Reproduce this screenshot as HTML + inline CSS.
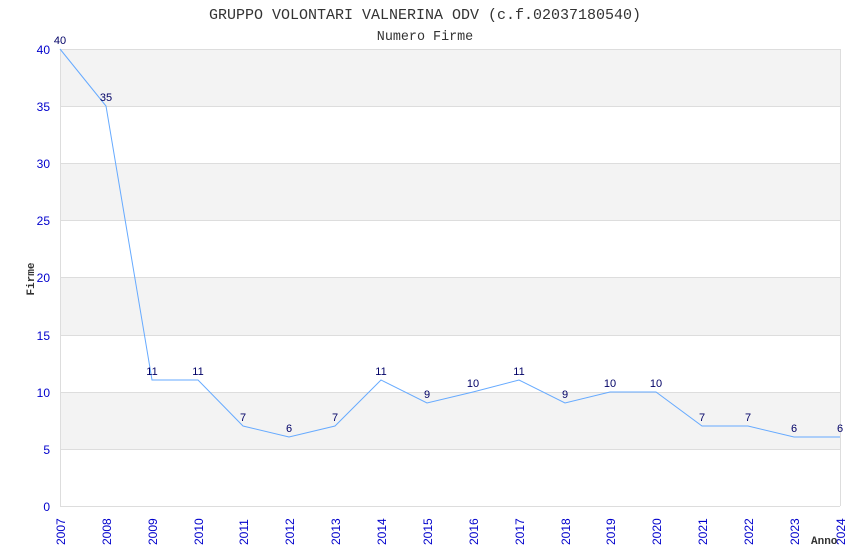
<!DOCTYPE html>
<html><head><style>body{margin:0;background:#fff}svg{display:block}</style></head><body>
<svg width="850" height="550" xmlns="http://www.w3.org/2000/svg" font-family="Liberation Sans, sans-serif">
<text x="425" y="19" text-anchor="middle" font-family="Liberation Mono, monospace" font-size="15" fill="#333">GRUPPO VOLONTARI VALNERINA ODV (c.f.02037180540)</text>
<text x="425" y="40" text-anchor="middle" font-family="Liberation Mono, monospace" font-size="13.4" fill="#333">Numero Firme</text>
<g fill="#f3f3f3">
<rect x="60" y="49" width="780" height="57"/>
<rect x="60" y="163" width="780" height="57"/>
<rect x="60" y="278" width="780" height="57"/>
<rect x="60" y="392" width="780" height="57"/>
</g>
<g stroke="#ddd" stroke-width="1">
<line x1="60" y1="49.5" x2="840" y2="49.5"/><line x1="60" y1="106.5" x2="840" y2="106.5"/>
<line x1="60" y1="163.5" x2="840" y2="163.5"/><line x1="60" y1="220.5" x2="840" y2="220.5"/>
<line x1="60" y1="277.5" x2="840" y2="277.5"/><line x1="60" y1="335.5" x2="840" y2="335.5"/>
<line x1="60" y1="392.5" x2="840" y2="392.5"/><line x1="60" y1="449.5" x2="840" y2="449.5"/>
<line x1="60" y1="506.5" x2="840" y2="506.5"/>
<line x1="60.5" y1="49" x2="60.5" y2="506"/><line x1="840.5" y1="49" x2="840.5" y2="506"/>
</g>
<g fill="#00c" font-size="12" text-anchor="end">
<text x="50" y="54">40</text><text x="50" y="111">35</text><text x="50" y="168">30</text>
<text x="50" y="225">25</text><text x="50" y="282">20</text><text x="50" y="340">15</text>
<text x="50" y="397">10</text><text x="50" y="454">5</text><text x="50" y="511">0</text>
</g>
<text transform="translate(34,279) rotate(-90)" text-anchor="middle" font-family="Liberation Mono, monospace" font-size="11" font-weight="bold" fill="#333">Firme</text>
<polyline fill="none" stroke="#66aaff" stroke-width="1" points="60,49 106,106 152,380 198,380 243,426 289,437 335,426 381,380 427,403 473,392 519,380 565,403 610,392 656,392 702,426 748,426 794,437 840,437"/>
<g fill="#006" font-size="11" text-anchor="middle">
<text x="60" y="44">40</text><text x="106" y="101">35</text><text x="152" y="375">11</text>
<text x="198" y="375">11</text><text x="243" y="421">7</text><text x="289" y="432">6</text>
<text x="335" y="421">7</text><text x="381" y="375">11</text><text x="427" y="398">9</text>
<text x="473" y="387">10</text><text x="519" y="375">11</text><text x="565" y="398">9</text>
<text x="610" y="387">10</text><text x="656" y="387">10</text><text x="702" y="421">7</text>
<text x="748" y="421">7</text><text x="794" y="432">6</text><text x="840" y="432">6</text>
</g>
<g fill="#00c" font-size="12">
<text transform="translate(65,545) rotate(-90)">2007</text>
<text transform="translate(111,545) rotate(-90)">2008</text>
<text transform="translate(157,545) rotate(-90)">2009</text>
<text transform="translate(203,545) rotate(-90)">2010</text>
<text transform="translate(248,545) rotate(-90)">2011</text>
<text transform="translate(294,545) rotate(-90)">2012</text>
<text transform="translate(340,545) rotate(-90)">2013</text>
<text transform="translate(386,545) rotate(-90)">2014</text>
<text transform="translate(432,545) rotate(-90)">2015</text>
<text transform="translate(478,545) rotate(-90)">2016</text>
<text transform="translate(524,545) rotate(-90)">2017</text>
<text transform="translate(570,545) rotate(-90)">2018</text>
<text transform="translate(615,545) rotate(-90)">2019</text>
<text transform="translate(661,545) rotate(-90)">2020</text>
<text transform="translate(707,545) rotate(-90)">2021</text>
<text transform="translate(753,545) rotate(-90)">2022</text>
<text transform="translate(799,545) rotate(-90)">2023</text>
<text transform="translate(845,545) rotate(-90)">2024</text>
</g>
<text x="811" y="544" font-family="Liberation Mono, monospace" font-size="11" font-weight="bold" fill="#333">Anno</text>
</svg>
</body></html>
